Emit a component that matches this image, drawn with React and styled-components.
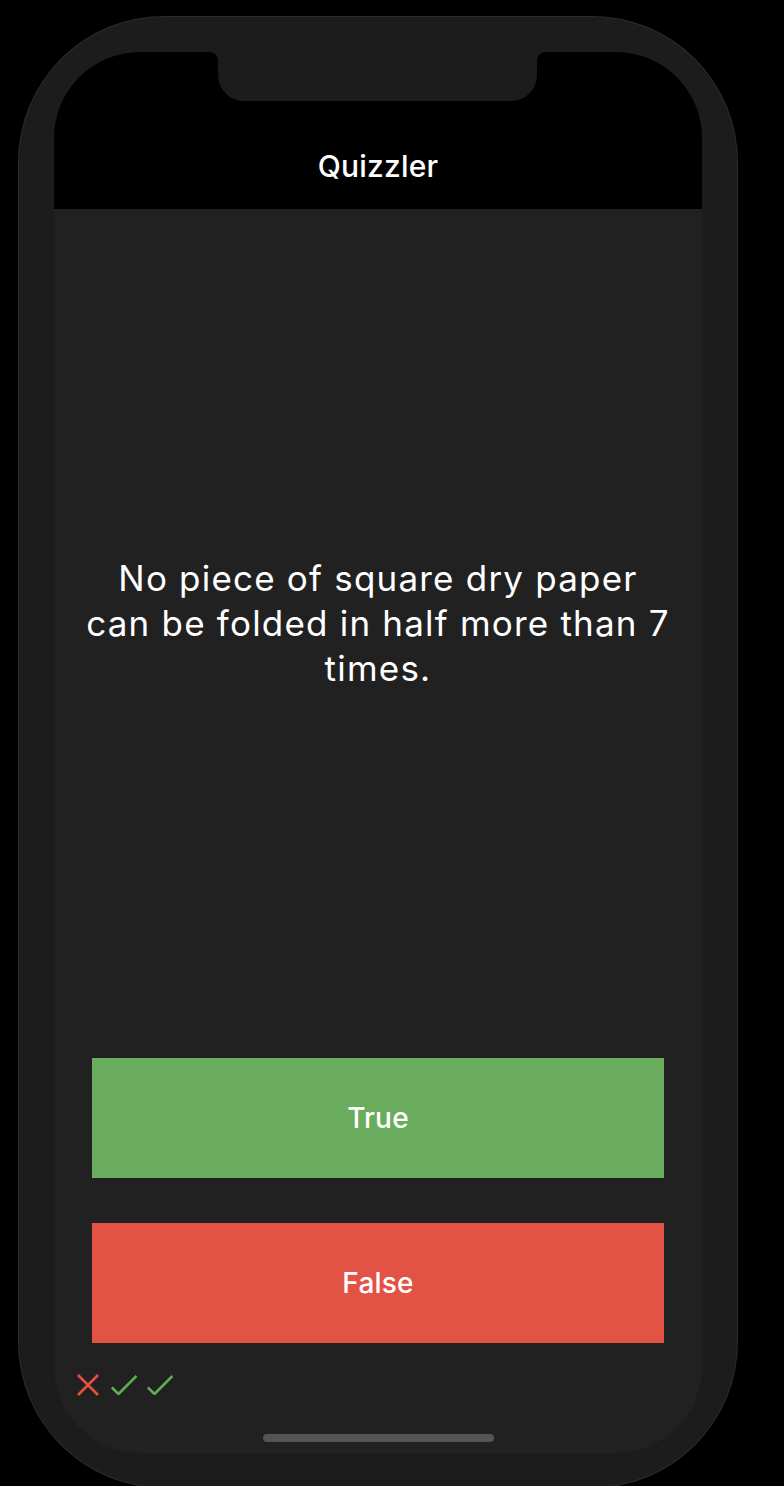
import React from "react";
import styled, { createGlobalStyle } from "styled-components";

const GlobalStyle = createGlobalStyle`
  html, body {
    margin: 0;
    padding: 0;
    background: #000000;
  }
  body {
    font-family: Inter, Roboto, "Liberation Sans", sans-serif;
    -webkit-font-smoothing: antialiased;
  }
`;

const Stage = styled.div`
  width: 784px;
  height: 1486px;
  overflow: hidden;
  padding: 17px 0 0 19px;
  box-sizing: border-box;
`;

const Phone = styled.div`
  position: relative;
  width: 718px;
  height: 1470px;
  box-sizing: border-box;
  padding: 35px 35px 34px 35px;
  border-radius: 145px;
  background: #1c1c1c;
  box-shadow: 0 0 0 1px #2c2c2c;
`;

const SideButton = styled.div`
  position: absolute;
  top: ${(props) => props.top}px;
  ${(props) => (props.right ? "right: -8px;" : "left: -8px;")}
  width: 9px;
  height: ${(props) => props.height}px;
  border-radius: 2px;
  background: #2c2c2c;
  border: 1px solid #353535;
  z-index: -1;
`;

const Screen = styled.div`
  position: relative;
  height: 100%;
  display: flex;
  flex-direction: column;
  border-radius: 86px;
  overflow: hidden;
  background: #212121;
`;

const Notch = styled.div`
  position: absolute;
  top: 0;
  left: 164px;
  width: 319px;
  height: 49px;
  background: #1c1c1c;
  border-radius: 0 0 26px 26px;

  &::before,
  &::after {
    content: "";
    position: absolute;
    top: 0;
    width: 8px;
    height: 8px;
  }
  &::before {
    left: -8px;
    background: radial-gradient(circle at 0 100%, transparent 7.5px, #1c1c1c 8px);
  }
  &::after {
    right: -8px;
    background: radial-gradient(circle at 100% 100%, transparent 7.5px, #1c1c1c 8px);
  }
`;

const Header = styled.div`
  height: 157px;
  flex-shrink: 0;
  box-sizing: border-box;
  background: #000000;
  display: flex;
  align-items: flex-end;
  justify-content: center;
  padding-bottom: 26px;
`;

const Title = styled.h1`
  margin: 0;
  color: #ffffff;
  font-size: 30px;
  line-height: 34px;
  font-weight: 500;
  letter-spacing: 0.2px;
`;

const QuestionArea = styled.div`
  flex: 1;
  display: flex;
  align-items: center;
  justify-content: center;
  padding: 0 20px 20px;
`;

const Question = styled.p`
  margin: 0;
  color: #ffffff;
  font-size: 35px;
  line-height: 45px;
  font-weight: 400;
  text-align: center;
  letter-spacing: 1.2px;
`;

const ButtonStack = styled.div`
  display: flex;
  flex-direction: column;
  gap: 45px;
  padding: 0 38px;
`;

const AnswerButton = styled.button`
  height: 120px;
  border: none;
  border-radius: 0;
  background: ${(props) => props.color};
  color: #ffffff;
  font-family: Inter, Roboto, "Liberation Sans", sans-serif;
  font-size: 28px;
  font-weight: 500;
  letter-spacing: 0.2px;
  cursor: pointer;
`;

const ScoreRow = styled.div`
  display: flex;
  align-items: center;
  gap: 10px;
  height: 22px;
  margin-top: 31px;
  padding-left: 23px;
  margin-bottom: 57px;
`;

const HomeIndicator = styled.div`
  position: absolute;
  bottom: 11px;
  left: 209px;
  width: 231px;
  height: 8px;
  border-radius: 4px;
  background: #545454;
`;

function Cross() {
  return (
    <svg width="24" height="22" viewBox="0 0 24 22">
      <path d="M1 1 L21 21 M21 1 L1 21" stroke="#e4523f" strokeWidth="2.6" fill="none" />
    </svg>
  );
}

function Check() {
  return (
    <svg width="26" height="20" viewBox="0 0 26 20">
      <path d="M0.8 12.5 L7.5 19 L25.5 1" stroke="#5fae54" strokeWidth="2.6" fill="none" />
    </svg>
  );
}

const questionLines = ["No piece of square dry paper", "can be folded in half more than 7", "times."];
const scores = [false, true, true];

export default function App() {
  return (
    <>
      <GlobalStyle />
      <Stage>
        <Phone>
          <SideButton top={181} height={52} />
          <SideButton top={276} height={91} />
          <SideButton top={380} height={92} />
          <SideButton right top={275} height={92} />
          <Screen>
            <Header>
              <Notch />
              <Title>Quizzler</Title>
            </Header>
            <QuestionArea>
              <Question>
                {questionLines.map((line, i) => (
                  <React.Fragment key={i}>
                    {i > 0 && <br />}
                    {line}
                  </React.Fragment>
                ))}
              </Question>
            </QuestionArea>
            <ButtonStack>
              <AnswerButton color="#69ac5d">True</AnswerButton>
              <AnswerButton color="#e25345">False</AnswerButton>
            </ButtonStack>
            <ScoreRow>
              {scores.map((ok, i) => (ok ? <Check key={i} /> : <Cross key={i} />))}
            </ScoreRow>
            <HomeIndicator />
          </Screen>
        </Phone>
      </Stage>
    </>
  );
}
